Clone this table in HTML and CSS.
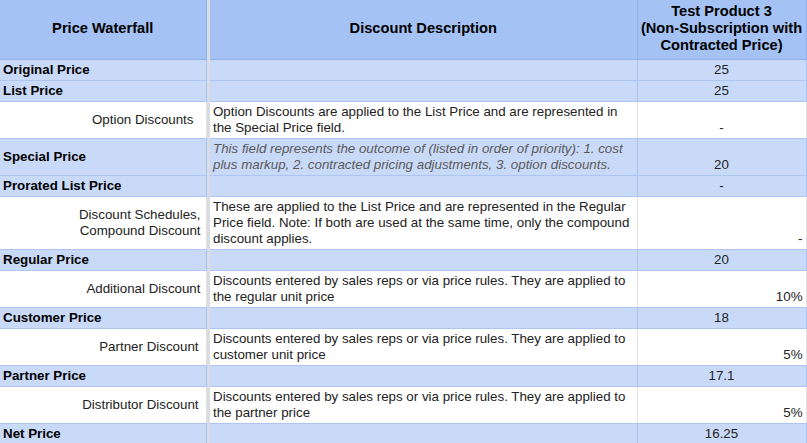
FILE: index.html
```html
<!DOCTYPE html>
<html lang="en">
<head>
<meta charset="utf-8">
<title>Price Waterfall</title>
<link rel="stylesheet" href="styles.css">
</head>
<body>
<table class="sheet">
  <colgroup>
    <col class="w-label">
    <col class="w-freeze">
    <col class="w-desc">
    <col class="w-val">
  </colgroup>
  <tbody>
    <tr class="head">
      <th>Price Waterfall</th>
      <td class="freeze" rowspan="14"></td>
      <th>Discount Description</th>
      <th>Test Product 3<br>(Non-Subscription with<br>Contracted Price)</th>
    </tr>
    <tr class="hl">
      <td class="lbl">Original Price</td>
      <td class="desc"></td>
      <td class="val">25</td>
    </tr>
    <tr class="hl">
      <td class="lbl">List Price</td>
      <td class="desc"></td>
      <td class="val">25</td>
    </tr>
    <tr>
      <td class="sub sub-wide">Option Discounts</td>
      <td class="desc">Option Discounts are applied to the List Price and are represented in<br>the Special Price field.</td>
      <td class="val">-</td>
    </tr>
    <tr class="hl">
      <td class="lbl">Special Price</td>
      <td class="desc note">This field represents the outcome of (listed in order of priority): 1. cost<br>plus markup, 2. contracted pricing adjustments, 3. option discounts.</td>
      <td class="val">20</td>
    </tr>
    <tr class="hl">
      <td class="lbl">Prorated List Price</td>
      <td class="desc"></td>
      <td class="val">-</td>
    </tr>
    <tr>
      <td class="sub">Discount Schedules,<br>Compound Discount</td>
      <td class="desc">These are applied to the List Price and are represented in the Regular<br>Price field. Note: If both are used at the same time, only the compound<br>discount applies.</td>
      <td class="val right">-</td>
    </tr>
    <tr class="hl">
      <td class="lbl">Regular Price</td>
      <td class="desc"></td>
      <td class="val">20</td>
    </tr>
    <tr>
      <td class="sub">Additional Discount</td>
      <td class="desc">Discounts entered by sales reps or via price rules. They are applied to<br>the regular unit price</td>
      <td class="val right">10%</td>
    </tr>
    <tr class="hl">
      <td class="lbl">Customer Price</td>
      <td class="desc"></td>
      <td class="val">18</td>
    </tr>
    <tr>
      <td class="sub sub-mid">Partner Discount</td>
      <td class="desc">Discounts entered by sales reps or via price rules. They are applied to<br>customer unit price</td>
      <td class="val right">5%</td>
    </tr>
    <tr class="hl">
      <td class="lbl">Partner Price</td>
      <td class="desc"></td>
      <td class="val">17.1</td>
    </tr>
    <tr>
      <td class="sub sub-mid">Distributor Discount</td>
      <td class="desc">Discounts entered by sales reps or via price rules. They are applied to<br>the partner price</td>
      <td class="val right">5%</td>
    </tr>
    <tr class="hl">
      <td class="lbl">Net Price</td>
      <td class="desc"></td>
      <td class="val">16.25</td>
    </tr>
  </tbody>
</table>
</body>
</html>
```

FILE: styles.css
```css
html, body {
  margin: 0;
  padding: 0;
  background: #ffffff;
}

body {
  font-family: "Liberation Sans", Arial, sans-serif;
  color: #000000;
}

.sheet {
  border-collapse: collapse;
  table-layout: fixed;
  width: 806px;
}

.w-label { width: 206px; }
.w-freeze { width: 4px; }
.w-desc { width: 427px; }
.w-val { width: 169px; }

.sheet th,
.sheet td {
  padding: 2px 3px;
  font-size: 13.33px;
  line-height: 16px;
  border-right: 1px solid #e1e1e1;
  border-bottom: 1px solid #adc5ef;
  white-space: nowrap;
  overflow: hidden;
}

.head th {
  background: #a4c2f4;
  font-size: 14.67px;
  line-height: 17px;
  font-weight: bold;
  text-align: center;
  vertical-align: middle;
  padding: 3px 3px 5px;
  border-right-color: #93b2e6;
  border-bottom-color: #8fb0e6;
  color: #000000;
}

.sheet td.freeze {
  background: #d9dde3;
  padding: 0;
  border: none;
}

.hl td {
  background: #c9daf8;
  border-right-color: #a9c2ee;
}

.lbl {
  font-weight: bold;
  text-align: left;
  vertical-align: middle;
}

.sub {
  text-align: right;
  vertical-align: middle;
  color: #222222;
  padding-right: 5px !important;
}

.sub-wide {
  padding-right: 12px !important;
}

.sub-mid {
  padding-right: 7px !important;
}

.desc {
  text-align: left;
  vertical-align: top;
  color: #222222;
}

.note {
  font-style: italic;
  color: #595959;
}

.val {
  text-align: center;
  vertical-align: bottom;
  color: #222222;
}

.val.right {
  text-align: right;
}
```
